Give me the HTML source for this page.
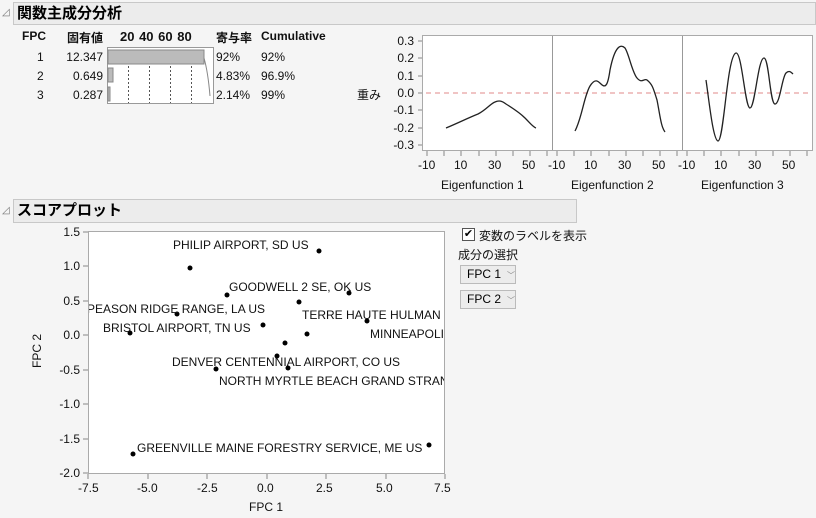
<!DOCTYPE html>
<html><head><meta charset="utf-8"><style>
body{margin:0;width:816px;height:518px;background:#f5f5f5;font-family:"Liberation Sans","Noto Sans CJK JP",sans-serif;overflow:hidden;position:relative}
.hd{position:absolute;background:#ececec;border:1px solid #c8c8c8;font-weight:bold;font-size:15px;color:#000;padding-left:3px;box-sizing:border-box;line-height:21px}
.tri{position:absolute;font-size:10px;color:#777}
.t{position:absolute;font-size:12px;color:#111;white-space:nowrap}
.r{text-align:right}
.dd{position:absolute;left:460px;width:56px;height:19px;border:1px solid #bbb;background:#ececec;box-sizing:border-box;font-size:12px;line-height:17px;padding-left:6px}
.dd span{font-size:8px;color:#888;margin-left:6px}
</style></head><body>
<div class="tri" style="left:2px;top:7px">◿</div>
<div class="hd" style="left:13px;top:2px;width:803px;height:23px">関数主成分分析</div>
<div class="t" style="left:22px;top:29px;font-weight:bold">FPC</div>
<div class="t" style="left:67px;top:29px;font-weight:bold">固有値</div>
<div class="t" style="left:120px;top:29px;font-weight:bold;font-size:13px;word-spacing:1px">20 40 60 80</div>
<div class="t" style="left:216px;top:29px;font-weight:bold">寄与率</div>
<div class="t" style="left:261px;top:29px;font-weight:bold">Cumulative</div>
<div class="t" style="left:37px;top:50px">1</div><div class="t r" style="left:50px;top:50px;width:53px">12.347</div>
<div class="t" style="left:37px;top:69px">2</div><div class="t r" style="left:50px;top:69px;width:53px">0.649</div>
<div class="t" style="left:37px;top:88px">3</div><div class="t r" style="left:50px;top:88px;width:53px">0.287</div>
<div class="t" style="left:216px;top:50px">92%</div><div class="t" style="left:261px;top:50px">92%</div>
<div class="t" style="left:216px;top:69px">4.83%</div><div class="t" style="left:261px;top:69px">96.9%</div>
<div class="t" style="left:216px;top:88px">2.14%</div><div class="t" style="left:261px;top:88px">99%</div>
<svg style="position:absolute;left:0;top:0" width="816" height="518">
<rect x="107.5" y="47.5" width="106" height="56" fill="#fff" stroke="#999"/>
<g stroke="#555" stroke-dasharray="2,2"><line x1="128.5" y1="66" x2="128.5" y2="103"/><line x1="149.5" y1="66" x2="149.5" y2="103"/><line x1="170.5" y1="66" x2="170.5" y2="103"/><line x1="191.5" y1="66" x2="191.5" y2="103"/></g>
<rect x="108" y="50" width="96" height="14" fill="#bbb" stroke="#888"/>
<rect x="108" y="68" width="5" height="14" fill="#bbb" stroke="#888"/>
<rect x="108" y="87" width="2" height="14" fill="#bbb" stroke="#888"/>
<path d="M204 58 Q208 72 210 96" fill="none" stroke="#888"/>
<rect x="422.5" y="35.5" width="390" height="115" fill="#fff" stroke="#aaa"/>
<line x1="552.5" y1="36" x2="552.5" y2="150" stroke="#999"/><line x1="682.5" y1="36" x2="682.5" y2="150" stroke="#999"/>
<g stroke="#888">
<line x1="418" y1="41" x2="422" y2="41"/><line x1="418" y1="58" x2="422" y2="58"/><line x1="418" y1="76" x2="422" y2="76"/><line x1="418" y1="93" x2="422" y2="93"/><line x1="418" y1="110" x2="422" y2="110"/><line x1="418" y1="128" x2="422" y2="128"/><line x1="418" y1="145" x2="422" y2="145"/>
</g>
<g stroke="#888">
<path d="M427 151v5M444 151v5M461 151v5M479 151v5M496 151v5M513 151v5M530 151v5M547 151v5"/>
<path d="M557 151v5M574 151v5M591 151v5M609 151v5M626 151v5M643 151v5M660 151v5M677 151v5"/>
<path d="M687 151v5M704 151v5M721 151v5M739 151v5M756 151v5M773 151v5M790 151v5M807 151v5"/>
</g>
<g stroke="#e08a8a" stroke-dasharray="5,4"><line x1="426" y1="93" x2="548" y2="93"/><line x1="556" y1="93" x2="678" y2="93"/><line x1="686" y1="93" x2="808" y2="93"/></g>
<g fill="none" stroke="#222" stroke-width="1.3">
<path d="M446 128 C458 123 468 118 478 114 C486 110 490 104 495 102 C499 100 502 101 506 104 C514 109 520 113 525 118 C530 123 533 127 536 128"/>
<path d="M575 131 C582 118 584 96 590 86 C595 78 598 81 601 84 C606 89 608 84 610 70 C615 45 621 44 625 48 C629 54 632 72 637 78 C642 84 644 78 647 80 C652 84 653 87 657 100 C660 115 661 127 665 132"/>
<path d="M706 80 C709 100 713 140 718 141 C724 141 727 55 736 53 C742 52 745 108 750 108 C755 108 758 58 764 58 C769 58 770 104 775 104 C780 104 782 77 786 73 C789 70 791 72 793 74"/>
</g>
<rect x="88.5" y="231.5" width="356" height="242" fill="#fff" stroke="#aaa"/>
<g stroke="#888">
<path d="M83 232h5M83 266h5M83 301h5M83 335h5M83 370h5M83 404h5M83 439h5M83 473h5"/>
<path d="M88 474v5M148 474v5M207 474v5M267 474v5M326 474v5M386 474v5M445 474v5"/>
</g>
<g fill="#000">
<circle cx="319" cy="251" r="2.5"/><circle cx="190" cy="268" r="2.5"/><circle cx="227" cy="295" r="2.5"/><circle cx="349" cy="293" r="2.5"/><circle cx="299" cy="302" r="2.5"/><circle cx="130" cy="333" r="2.5"/><circle cx="177" cy="314" r="2.5"/><circle cx="263" cy="325" r="2.5"/><circle cx="367" cy="321" r="2.5"/><circle cx="307" cy="334" r="2.5"/><circle cx="285" cy="343" r="2.5"/><circle cx="277" cy="356" r="2.5"/><circle cx="216" cy="369" r="2.5"/><circle cx="288" cy="368" r="2.5"/><circle cx="133" cy="454" r="2.5"/><circle cx="429" cy="445" r="2.5"/>
</g>
</svg>
<div class="t" style="left:394px;top:34px;width:20px;text-align:right">0.3</div>
<div class="t r" style="left:384px;top:51px;width:30px">0.2</div>
<div class="t r" style="left:384px;top:69px;width:30px">0.1</div>
<div class="t r" style="left:384px;top:86px;width:30px">0.0</div>
<div class="t r" style="left:384px;top:103px;width:30px">-0.1</div>
<div class="t r" style="left:384px;top:121px;width:30px">-0.2</div>
<div class="t r" style="left:384px;top:138px;width:30px">-0.3</div>
<div class="t" style="left:357px;top:86px">重み</div>
<div class="t" style="left:418px;top:158px">-10</div><div class="t" style="left:454px;top:158px">10</div><div class="t" style="left:488px;top:158px">30</div><div class="t" style="left:522px;top:158px">50</div>
<div class="t" style="left:548px;top:158px">-10</div><div class="t" style="left:584px;top:158px">10</div><div class="t" style="left:618px;top:158px">30</div><div class="t" style="left:652px;top:158px">50</div>
<div class="t" style="left:678px;top:158px">-10</div><div class="t" style="left:714px;top:158px">10</div><div class="t" style="left:748px;top:158px">30</div><div class="t" style="left:782px;top:158px">50</div>
<div class="t" style="left:441px;top:178px">Eigenfunction 1</div>
<div class="t" style="left:571px;top:178px">Eigenfunction 2</div>
<div class="t" style="left:701px;top:178px">Eigenfunction 3</div>
<div class="tri" style="left:2px;top:205px">◿</div>
<div class="hd" style="left:13px;top:199px;width:564px;height:24px">スコアプロット</div>
<div class="t r" style="left:40px;top:225px;width:40px">1.5</div>
<div class="t r" style="left:40px;top:259px;width:40px">1.0</div>
<div class="t r" style="left:40px;top:294px;width:40px">0.5</div>
<div class="t r" style="left:40px;top:328px;width:40px">0.0</div>
<div class="t r" style="left:40px;top:363px;width:40px">-0.5</div>
<div class="t r" style="left:40px;top:397px;width:40px">-1.0</div>
<div class="t r" style="left:40px;top:432px;width:40px">-1.5</div>
<div class="t r" style="left:40px;top:466px;width:40px">-2.0</div>
<div class="t" style="left:30px;top:368px;transform:rotate(-90deg);transform-origin:left top">FPC 2</div>
<div class="t" style="left:78px;top:481px">-7.5</div><div class="t" style="left:137px;top:481px">-5.0</div><div class="t" style="left:197px;top:481px">-2.5</div><div class="t" style="left:257px;top:481px">0.0</div><div class="t" style="left:316px;top:481px">2.5</div><div class="t" style="left:376px;top:481px">5.0</div><div class="t" style="left:434px;top:481px">7.5</div>
<div class="t" style="left:249px;top:500px">FPC 1</div>
<div style="position:absolute;left:89px;top:232px;width:355px;height:241px;overflow:hidden">
<div class="t" style="left:84px;top:6px">PHILIP AIRPORT, SD US</div>
<div class="t" style="left:140px;top:48px">GOODWELL 2 SE, OK US</div>
<div class="t" style="left:-2px;top:70px">PEASON RIDGE RANGE, LA US</div>
<div class="t" style="left:213px;top:76px">TERRE HAUTE HULMAN</div>
<div class="t" style="left:14px;top:89px">BRISTOL AIRPORT, TN US</div>
<div class="t" style="left:281px;top:95px">MINNEAPOLIS</div>
<div class="t" style="left:83px;top:123px">DENVER CENTENNIAL AIRPORT, CO US</div>
<div class="t" style="left:130px;top:142px">NORTH MYRTLE BEACH GRAND STRAND</div>
<div class="t" style="left:48px;top:209px">GREENVILLE MAINE FORESTRY SERVICE, ME US</div>
</div>
<div style="position:absolute;left:462px;top:228px;width:11px;height:11px;border:1px solid #555;background:#fff;font-size:11px;line-height:11px;text-align:center">✔</div>
<div class="t" style="left:479px;top:227px">変数のラベルを表示</div>
<div class="t" style="left:458px;top:246px">成分の選択</div>
<div class="dd" style="top:265px">FPC 1<span>﹀</span></div>
<div class="dd" style="top:290px">FPC 2<span>﹀</span></div>
</body></html>
